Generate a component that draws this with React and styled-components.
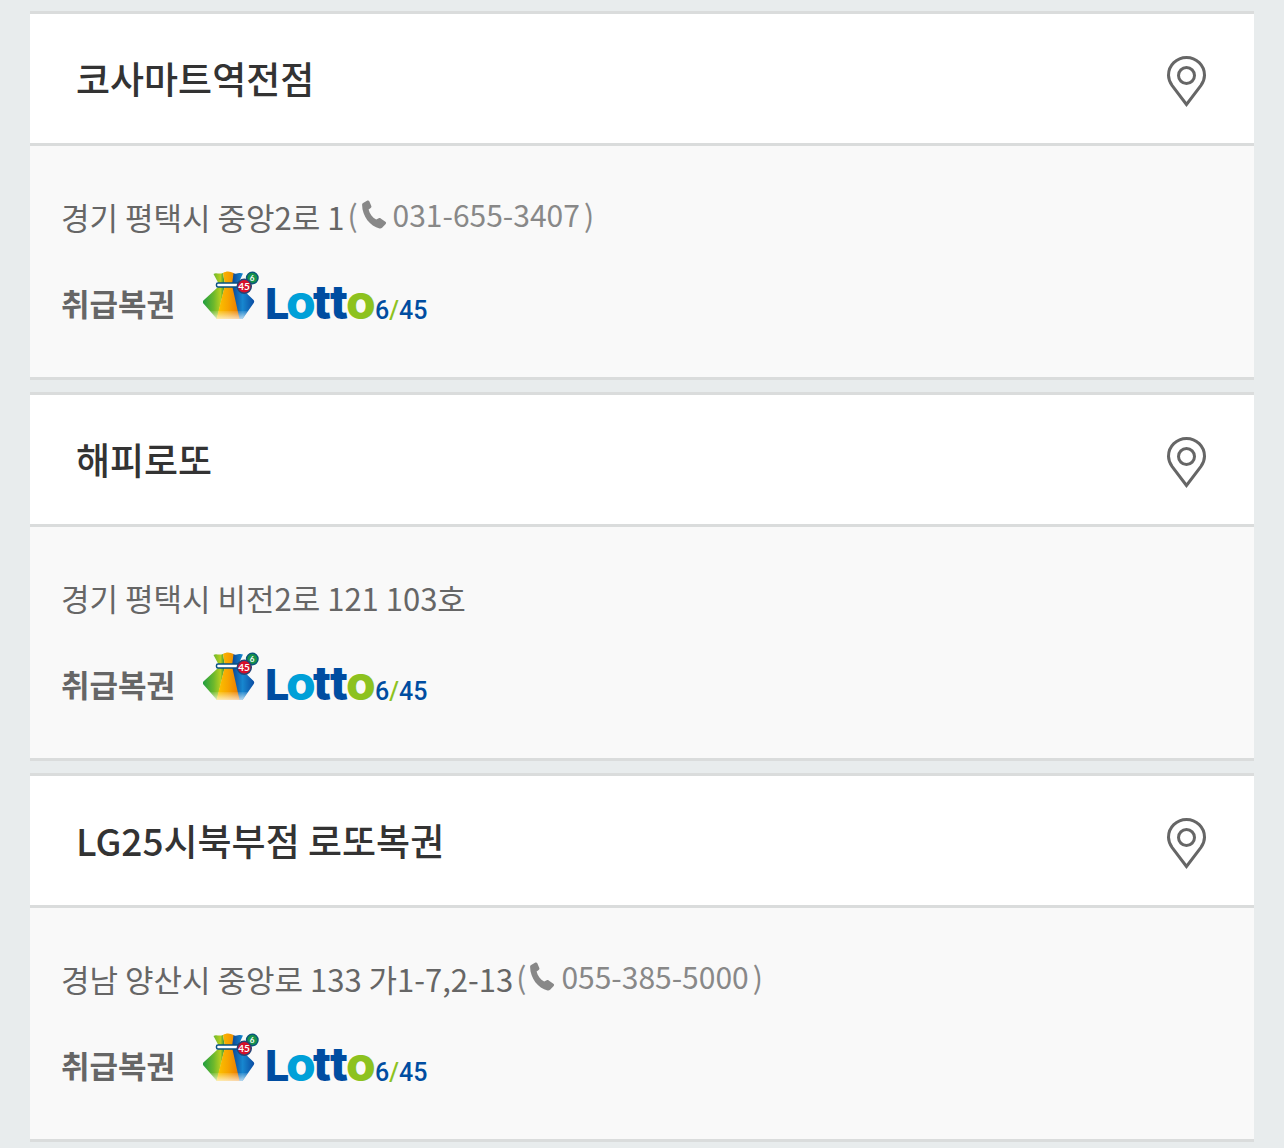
import React from 'react';
import styled, { createGlobalStyle } from 'styled-components';

const GlobalStyle = createGlobalStyle`
  * {
    box-sizing: border-box;
  }
  body {
    margin: 0;
    background: #e8eced;
    color: #666;
    font-family: 'Noto Sans CJK KR', 'Noto Sans', sans-serif;
    font-size: 31px;
    line-height: 48px;
  }
`;

const List = styled.ul`
  display: flex;
  flex-direction: column;
  gap: 12px;
  margin: 0;
  padding: 11px 30px 6px;
  list-style: none;
`;
const Card = styled.li`
  border-top: 3px solid #dadcdc;
  border-bottom: 3px solid #dadcdc;
  background: #f9f9f9;
`;
const Header = styled.div`
  display: flex;
  align-items: center;
  justify-content: space-between;
  padding: 34px 48px 35px 46px;
  border-bottom: 3px solid #dadcdc;
  background: #fff;
`;
const Name = styled.h2`
  margin: 0;
  color: #333;
  font-size: 37px;
  font-weight: 500;
  line-height: 58px;
`;
const MapButton = styled.button`
  display: flex;
  padding: 8px 0 0;
  border: 0;
  background: none;
  cursor: pointer;
`;
const Body = styled.div`
  display: flex;
  flex-direction: column;
  gap: 30px;
  padding: 47px 31px 44px;
`;
const Address = styled.div`
  display: flex;
  flex-wrap: wrap;
  gap: 3px;
`;
const Contact = styled.span`
  display: flex;
  align-items: center;
  gap: 4px;
  padding-bottom: 6px;
  color: #888;
  font-size: 30px;
  line-height: 42px;
`;
const Phone = styled.a`
  display: flex;
  align-items: center;
  gap: 6px;
  color: inherit;
  text-decoration: none;
`;
const Games = styled.div`
  display: flex;
  gap: 28px;
`;
const Label = styled.strong`
  padding-top: 8px;
  font-weight: 700;
`;

const PinIcon = () => (
  <svg width="39" height="52" viewBox="0 0 39 52" fill="none" stroke="#666" strokeWidth="3" aria-hidden="true">
    <path d="M19.500 48.500 5.200 29.600C2.800 26.200 1.500 23 1.500 19.200a18 17.700 0 0 1 36 0c0 3.800-1.300 7-3.700 10.400Z" />
    <circle cx="19.500" cy="19.500" r="8" />
  </svg>
);

const PhoneIcon = () => (
  <svg width="25" height="29" viewBox="0 0 25 29" fill="#888" aria-hidden="true">
    <path d="M.7 3.300 5.400.6c.8-.4 1.500-.1 1.900.7l2 4.700c.3.800.1 1.500-.6 2L6.600 9.600c.9 4.200 3.700 8 7.600 10l2.500-1.300c.7-.4 1.400-.3 2 .2l4.700 3.300c.8.600.9 1.400.3 2.100l-3.600 3.800c-.6.600-1.500.8-2.500.7C8.100 26.500.3 16.300.1 5.100c0-.8.100-1.400.6-1.800Z" />
  </svg>
);

const LottoLogo = () => (
  <svg width="232" height="62" viewBox="0 0 232 62" role="img" aria-label="Lotto 6/45">
    <defs>
      <linearGradient id="bagGreen" x1="0" y1="0" x2="1" y2="0">
        <stop offset="0" stopColor="#1f9d3f" />
        <stop offset="0.5" stopColor="#6fb92c" />
        <stop offset="0.8" stopColor="#b5cf1f" />
        <stop offset="1" stopColor="#1d8a3c" />
      </linearGradient>
      <linearGradient id="bagOrange" x1="0" y1="0" x2="1" y2="0">
        <stop offset="0" stopColor="#fcc800" />
        <stop offset="0.5" stopColor="#f7a400" />
        <stop offset="1" stopColor="#e97800" />
      </linearGradient>
      <linearGradient id="bagBlue" x1="0" y1="0" x2="1" y2="0">
        <stop offset="0" stopColor="#0a3f8f" />
        <stop offset="0.5" stopColor="#1787cf" />
        <stop offset="1" stopColor="#0b4ca3" />
      </linearGradient>
      <linearGradient id="bagFade" x1="0" y1="0" x2="0" y2="1">
        <stop offset="0" stopColor="#fff" stopOpacity="0.1" />
        <stop offset="1" stopColor="#fff" stopOpacity="0.7" />
      </linearGradient>
    </defs>
    <path fill="url(#bagGreen)" d="M10.500 3c3-2.200 5 .8 9.500-1L22 14 14 48 0 32c-.4-.8-.2-1.700.4-2.400L14.500 16.500c1.200-1.300 1.500-3 .7-4.800Z" />
    <path fill="url(#bagBlue)" d="M30 2c4 2 6-1.400 10 .6L36 11c-.6 1.800-.5 3.400.8 4.700L50.600 29c.8.900.8 2 .1 3L39.500 48H34L28 14Z" />
    <path fill="url(#bagOrange)" d="M20 2c3-2 7-2 10.500 0L29 14l7.500 34H13.500L22 14Z" />
    <path fill="url(#bagFade)" d="M7 40h38l-5.500 8h-26Z" />
    <rect x="13.500" y="12" width="25" height="4" rx="1.500" fill="#fff" stroke="#075184" strokeWidth="1.500" />
    <circle cx="49.300" cy="7" r="5.700" fill="#16924b" stroke="#07577a" strokeWidth="1.500" />
    <circle cx="41.300" cy="15.300" r="7" fill="#d7102a" stroke="#254476" strokeWidth="1.500" />
    <g fill="#fff" fontFamily="Lato, sans-serif" fontWeight="700" textAnchor="middle">
      <text x="49" y="10" fontSize="8">6</text>
      <text x="41" y="19" fontSize="10">45</text>
    </g>
    <g fontFamily="Inter, sans-serif" fontWeight="800">
      <text x="62" y="48" fontSize="43" fill="#004da1">L</text>
      <text x="83" y="48" fontSize="48" fill="#00a0d8">o</text>
      <text x="110" y="48" fontSize="47" fill="#004da1">t</text>
      <text x="127" y="48" fontSize="47" fill="#004da1">t</text>
      <text x="143" y="48" fontSize="48" fill="#8dc21f">o</text>
    </g>
    <text x="172" y="48" fontFamily="Roboto, sans-serif" fontWeight="500" fontSize="25" fill="#004da1">
      6<tspan fill="#8dc21f">/</tspan>45
    </text>
  </svg>
);

const Store = ({ name, address, phone }) => (
  <Card>
    <Header>
      <Name>{name}</Name>
      <MapButton type="button" aria-label={`${name} 지도`}>
        <PinIcon />
      </MapButton>
    </Header>
    <Body>
      <Address>
        <span>{address}</span>
        {phone && (
          <Contact>
            <span>(</span>
            <Phone href={`tel:${phone}`}>
              <PhoneIcon />
              {phone}
            </Phone>
            <span>)</span>
          </Contact>
        )}
      </Address>
      <Games>
        <Label>취급복권</Label>
        <LottoLogo />
      </Games>
    </Body>
  </Card>
);

const stores = [
  { name: '코사마트역전점', address: '경기 평택시 중앙2로 1', phone: '031-655-3407' },
  { name: '해피로또', address: '경기 평택시 비전2로 121 103호' },
  { name: 'LG25시북부점 로또복권', address: '경남 양산시 중앙로 133 가1-7,2-13', phone: '055-385-5000' },
];

const App = () => (
  <>
    <GlobalStyle />
    <List>
      {stores.map((store) => (
        <Store key={store.name} {...store} />
      ))}
    </List>
  </>
);

export default App;
